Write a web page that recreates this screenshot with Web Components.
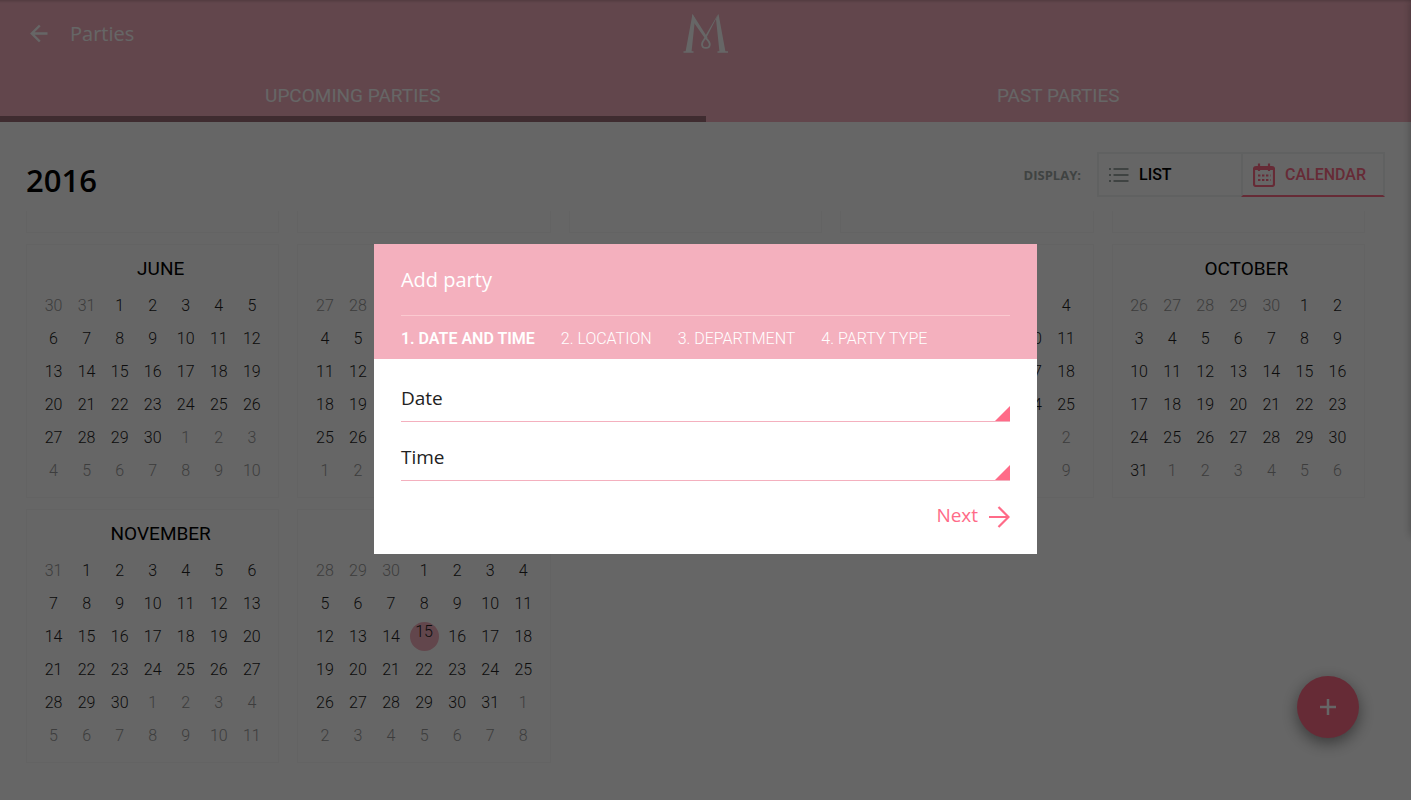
<!DOCTYPE html>
<html lang="en">
<head>
<meta charset="utf-8">
<title>Parties</title>
<style>
  html, body { height: 100%; }
  body {
    margin: 0;
    overflow: hidden;
    background: #fff;
    font-family: Roboto, "Liberation Sans", sans-serif;
    --pink: #f4b0be;
    --accent: #ff6b88;
    --sans: "Open Sans", "Noto Sans", sans-serif;
  }
</style>
</head>
<body>

<party-page>
  <party-header slot="header">Parties</party-header>
  <display-bar slot="bar" year="2016"></display-bar>
  <year-grid slot="content"></year-grid>
  <add-button slot="fab"></add-button>
  <party-dialog slot="dialog" heading="Add party">
    <drop-field label="Date"></drop-field>
    <drop-field label="Time"></drop-field>
  </party-dialog>
</party-page>

<template id="page">
  <style>
    :host { display: flex; flex-direction: column; height: 100vh; }
    main { flex: 1; min-height: 0; display: flex; flex-direction: column; }
    /* dims everything, the dialog sits in the middle of it */
    .overlay {
      position: fixed;
      inset: 0;
      display: flex;
      align-items: center;
      justify-content: center;
      padding-bottom: 2px;
      background: rgba(0, 0, 0, .6);
    }
    /* closed side drawer, only its shadow reaches the page */
    .drawer {
      position: fixed;
      inset: 0 -10px 264px auto;
      width: 10px;
      box-shadow: 0 0 10px rgba(0, 0, 0, .3);
    }
  </style>
  <slot name="header"></slot>
  <main>
    <slot name="bar"></slot>
    <slot name="content"></slot>
  </main>
  <slot name="fab"></slot>
  <div class="drawer"></div>
  <div class="overlay"><slot name="dialog"></slot></div>
</template>

<template id="header">
  <style>
    :host {
      display: block;
      background: var(--pink);
      box-shadow: inset 0 4px 3px -3px rgba(0, 0, 0, .2);
      color: #fff;
    }
    .top {
      display: grid;
      grid-template-columns: 1fr auto 1fr;
      align-items: center;
      height: 68px;
      padding: 0 27px;
    }
    .back { display: flex; align-items: center; gap: 19px; }
    .back button { display: block; padding: 0; border: 0; background: none; color: inherit; }
    h1 { margin: 0; font: 400 20px/28px var(--sans); }
    svg { display: block; }
    nav { display: flex; height: 54px; }
    nav a {
      flex: 1;
      display: flex;
      align-items: center;
      justify-content: center;
      box-sizing: border-box;
      padding-top: 8px;
      border-bottom: 6px solid transparent;
      color: inherit;
      font-size: 19px;
      line-height: 24px;
      text-decoration: none;
    }
    nav a.on { border-bottom-color: #9e6e78; }
  </style>
  <div class="top">
    <div class="back">
      <button type="button" aria-label="Back">
        <svg width="24" height="24" viewBox="0 0 24 24" fill="none" stroke="currentColor" stroke-width="2.400">
          <path d="M20.500 11.500H5M12.800 3.500L4.800 11.500l8 8"/>
        </svg>
      </button>
      <h1><slot></slot></h1>
    </div>
    <svg width="46" height="40" viewBox="0 0 46 40" fill="none" stroke="currentColor">
      <path stroke-width="1.600" d="M0.500 38H10.500M34.500 38H45"/>
      <path stroke="none" fill="currentColor" d="M9.500 0L12 5 8.500 38H2.500zM33 5L35.500 0 42.500 38H36.500z"/>
      <path stroke="none" fill="currentColor" d="M9.500 0L24.500 23.500 22.800 25.500 9 6zM35.500 0L23 24.500 21.500 23.200 34 2z"/>
      <path stroke-width="1.800" d="M23 23c-2.500 3.500-4 5-4 7.200 0 5 7.800 5 7.800 0 0-2.200-1.500-3.500-4-6.200"/>
    </svg>
  </div>
  <nav>
    <a href="#upcoming" class="on">UPCOMING PARTIES</a>
    <a href="#past">PAST PARTIES</a>
  </nav>
</template>

<template id="bar">
  <style>
    :host {
      display: flex;
      align-items: center;
      justify-content: space-between;
      padding: 30px 26px 14px;
    }
    h2 { margin: 0; padding-top: 10px; font: 600 31px/30px var(--sans); color: #000; }
    .display { display: flex; align-items: center; gap: 16px; }
    .label { font: 700 13px/16px var(--sans); color: #9fa8a6; }
    .switch { display: flex; }
    button {
      display: flex;
      align-items: center;
      gap: 10px;
      box-sizing: border-box;
      width: 144px;
      height: 45px;
      padding: 0 10px;
      border: 2px solid #eff3f3;
      background: none;
      font: 500 16px/20px Roboto, sans-serif;
      color: #000;
    }
    button.list { border-right: 0; }
    button.on { border-bottom: 2px solid var(--accent); color: var(--accent); }
    svg { display: block; }
  </style>
  <h2></h2>
  <div class="display">
    <span class="label">DISPLAY:</span>
    <div class="switch">
      <button type="button" class="list">
        <svg width="20" height="16" viewBox="0 0 20 16" stroke="#9fa8a6" stroke-width="2">
          <path d="M0 2h2M0 8h2M0 14h2M4.500 2H19.500M4.500 8H19.500M4.500 14H19.500"/>
        </svg>
        LIST
      </button>
      <button type="button" class="on">
        <svg width="22" height="24" viewBox="0 0 22 24" fill="none" stroke="currentColor" stroke-width="2.200">
          <rect x="1" y="4" width="20" height="19" rx="2"/>
          <path d="M1 6H21M6 0.500V8M16 0.500V8"/>
          <path stroke-dasharray="2.400 1.600" d="M5 12.500H17.500M5 17H17.500"/>
        </svg>
        CALENDAR
      </button>
    </div>
  </div>
</template>

<template id="grid">
  <style>
    :host {
      display: grid;
      grid-template-columns: repeat(5, 1fr);
      gap: 11px 18px;
      padding: 0 46px 36px 26px;
    }
    .tail { height: 21px; border: 1px solid #f8f8f8; border-top: 0; }
  </style>
</template>

<template id="month">
  <style>
    :host {
      display: block;
      box-sizing: border-box;
      padding: 12px 10px 10px;
      border: 1px solid #f8f8f8;
    }
    h3 {
      margin: 0 0 8px;
      padding-left: 16px;
      font-weight: 400;
      font-size: 19px;
      line-height: 24px;
      text-align: center;
      color: #000;
    }
    .days { display: grid; grid-template-columns: repeat(7, 1fr); }
    span {
      display: flex;
      justify-content: center;
      font-size: 16px;
      font-weight: 300;
      line-height: 33px;
      color: #222;
    }
    .other { color: #999; }
    .today::before {
      content: "";
      position: absolute;
      z-index: -1;
      width: 29px;
      height: 29px;
      margin-top: 2px;
      border-radius: 50%;
      background: var(--pink);
    }
    .today { line-height: 23px; }
  </style>
  <h3></h3>
  <div class="days"></div>
</template>

<template id="fab">
  <style>
    :host { position: fixed; right: 52px; bottom: 62px; }
    button {
      display: flex;
      align-items: center;
      justify-content: center;
      width: 62px;
      height: 62px;
      padding: 0;
      border: 0;
      border-radius: 50%;
      background: var(--accent);
      color: #fff;
      box-shadow: 0 5px 16px rgba(0, 0, 0, .45);
    }
  </style>
  <button type="button" aria-label="Add party">
    <svg width="16" height="16" viewBox="0 0 16 16" stroke="currentColor" stroke-width="2.500">
      <path d="M8 0V16M0 8H16"/>
    </svg>
  </button>
</template>

<template id="dialog">
  <style>
    :host { display: block; width: 47%; background: #fff; }
    header { padding: 0 27px; background: var(--pink); color: #fff; }
    h2 {
      margin: 0;
      padding: 22px 0 21px;
      border-bottom: 1px solid #fbc9d0;
      font: 400 20px/28px var(--sans);
    }
    ol {
      display: flex;
      gap: 26px;
      margin: 0;
      padding: 12px 0 9px;
      list-style: none;
      font-size: 16px;
      font-weight: 300;
      line-height: 22px;
      white-space: nowrap;
    }
    .on { font-weight: 600; }
    form { padding: 20px 27px 24px; }
    .next {
      display: flex;
      align-items: center;
      gap: 11px;
      margin: 19px 0 0 auto;
      padding: 0;
      border: 0;
      background: none;
      color: var(--accent);
      font: 400 19px/30px var(--sans);
    }
    svg { display: block; margin-top: 4px; }
  </style>
  <header>
    <h2></h2>
    <ol>
      <li class="on">1. DATE AND TIME</li>
      <li>2. LOCATION</li>
      <li>3. DEPARTMENT</li>
      <li>4. PARTY TYPE</li>
    </ol>
  </header>
  <form>
    <slot></slot>
    <button type="button" class="next">
      Next
      <svg width="21" height="22" viewBox="0 0 21 22" fill="none" stroke="currentColor" stroke-width="2.200">
        <path d="M0 11H19.500M9.500 1l10 10-10 10"/>
      </svg>
    </button>
  </form>
</template>

<template id="field">
  <style>
    :host { display: block; }
    :host(:not(:first-child)) { margin-top: 16px; }
    button {
      display: flex;
      align-items: flex-end;
      justify-content: space-between;
      width: 100%;
      padding: 0;
      border: 0;
      border-bottom: 1px solid var(--pink);
      background: none;
      color: #222;
      font: 400 19px/28px var(--sans);
      text-align: left;
    }
    .text { padding: 5px 0 9px; }
    svg { display: block; }
  </style>
  <button type="button" aria-haspopup="listbox">
    <span class="text"></span>
    <svg width="15" height="15" viewBox="0 0 15 15"><path fill="#ff6b88" d="M15 0V15H0z"/></svg>
  </button>
</template>

<script>
  // clones the template with this id into an open shadow root
  class Base extends HTMLElement {
    constructor() {
      super()
      this.attachShadow({mode: 'open'})
      let template = document.querySelector('#' + this.constructor.template)
      this.shadowRoot.append(template.content.cloneNode(true))
    }
    find(selector) {
      return this.shadowRoot.querySelector(selector)
    }
  }

  class PartyPage extends Base { static template = 'page' }
  class PartyHeader extends Base { static template = 'header' }
  class AddButton extends Base { static template = 'fab' }

  class DisplayBar extends Base {
    static template = 'bar'
    connectedCallback() {
      this.find('h2').textContent = this.getAttribute('year')
    }
  }

  class PartyDialog extends Base {
    static template = 'dialog'
    connectedCallback() {
      this.find('h2').textContent = this.getAttribute('heading')
    }
  }

  class DropField extends Base {
    static template = 'field'
    connectedCallback() {
      this.find('.text').textContent = this.getAttribute('label')
    }
  }

  // six weeks of seven days, filled up with the days of the months around
  class MonthCard extends Base {
    static template = 'month'
    connectedCallback() {
      let lead = Number(this.getAttribute('lead'))
      let before = Number(this.getAttribute('before'))
      let count = Number(this.getAttribute('count'))
      let today = Number(this.getAttribute('today'))
      this.find('h3').textContent = this.getAttribute('name')
      let days = this.find('.days')
      days.textContent = ''
      for (let i = 0; i < 42; i++) {
        let day = i - lead + 1
        let cell = document.createElement('span')
        if (day < 1) {
          cell.className = 'other'
          day += before
        } else if (day > count) {
          cell.className = 'other'
          day -= count
        } else if (day === today) {
          cell.className = 'today'
        }
        cell.textContent = day
        days.append(cell)
      }
    }
  }

  const months = [
    {name: 'JUNE', lead: 2, before: 31, count: 30},
    {name: 'JULY', lead: 4, before: 30, count: 31},
    {name: 'AUGUST', lead: 0, before: 31, count: 31},
    {name: 'SEPTEMBER', lead: 3, before: 31, count: 30},
    {name: 'OCTOBER', lead: 5, before: 30, count: 31},
    {name: 'NOVEMBER', lead: 1, before: 31, count: 30},
    {name: 'DECEMBER', lead: 3, before: 30, count: 31, today: 15},
  ]

  class YearGrid extends Base {
    static template = 'grid'
    connectedCallback() {
      // lower edges of the row that is scrolled away
      for (let i = 0; i < 5; i++) {
        let tail = document.createElement('div')
        tail.className = 'tail'
        this.shadowRoot.append(tail)
      }
      for (let month of months) {
        let card = document.createElement('month-card')
        for (let key in month) card.setAttribute(key, month[key])
        this.shadowRoot.append(card)
      }
    }
  }

  customElements.define('party-page', PartyPage)
  customElements.define('party-header', PartyHeader)
  customElements.define('display-bar', DisplayBar)
  customElements.define('month-card', MonthCard)
  customElements.define('year-grid', YearGrid)
  customElements.define('add-button', AddButton)
  customElements.define('drop-field', DropField)
  customElements.define('party-dialog', PartyDialog)
</script>
</body>
</html>
